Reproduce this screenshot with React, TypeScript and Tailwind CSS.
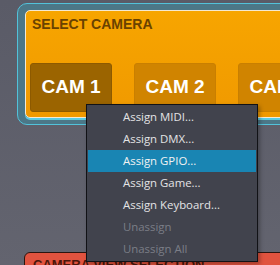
import React from 'react';

const cams = ['CAM 1', 'CAM 2', 'CAM 3'];

const menuItems = [
  { label: 'Assign MIDI...' },
  { label: 'Assign DMX...' },
  { label: 'Assign GPIO...', active: true },
  { label: 'Assign Game...' },
  { label: 'Assign Keyboard...' },
  { label: 'Unassign', disabled: true },
  { label: 'Unassign All', disabled: true },
];

const App = () => {
  return (
    <div className="relative w-[280px] h-[265px] overflow-hidden bg-gradient-to-b from-[#5a5b67] to-[#63646f] font-['Liberation_Sans',Arial,sans-serif]">
      {/* Select camera panel */}
      <div className="ml-[17px] mt-[3px] w-[330px] rounded-[10px] border border-[#52c2da] bg-[#4c7787] pt-[6px] pb-[6px] pl-[7px]">
        <div className="h-[108px] rounded-[5px] border border-[#f4e9d2] bg-gradient-to-b from-[#f7a500] to-[#f09900] pl-[4px] pt-[5px] shadow-[0_2px_0_#5ccbe2]">
          <div className="pl-[2px] text-[14px] leading-[16px] font-bold text-[#6a4200]">SELECT CAMERA</div>
          <div className="mt-[31px] flex gap-[22px]">
            {cams.map((cam, i) => (
              <div
                key={cam}
                className={`flex h-[49px] w-[82px] flex-shrink-0 items-center justify-center rounded-[3px] border text-[19px] font-bold text-white ${
                  i === 0 ? 'border-[#8d5a00] bg-[#9b6400]' : 'border-[#c97f00] bg-[#d08400]'
                }`}
              >
                {cam}
              </div>
            ))}
          </div>
        </div>
      </div>

      {/* Camera view panel (mostly hidden) */}
      <div className="ml-[24px] mt-[127px] h-[40px] w-[300px] rounded-[6px] border border-[#2b1510] bg-[#e1533f] px-[8px] pt-[4px]">
        <div className="text-[13px] leading-[16px] font-bold text-[#4a170c]">CAMERA VIEW SELECTION</div>
      </div>

      {/* Context menu */}
      <div className="absolute left-[86px] top-[104px] w-[172px] border border-[#111216] bg-[#41434d] p-[1px] shadow-[2px_2px_4px_rgba(0,0,0,0.3)] font-['Open_Sans',sans-serif]">
        {menuItems.map((item) => (
          <div
            key={item.label}
            className={`flex h-[22px] items-center pl-[35px] text-[11.4px] ${
              item.active ? 'bg-[#1985b3] text-[#f2f2f2]' : item.disabled ? 'text-[#7b7e87]' : 'text-[#e4e4e6]'
            }`}
          >
            {item.label}
          </div>
        ))}
      </div>
    </div>
  );
};

export default App;
